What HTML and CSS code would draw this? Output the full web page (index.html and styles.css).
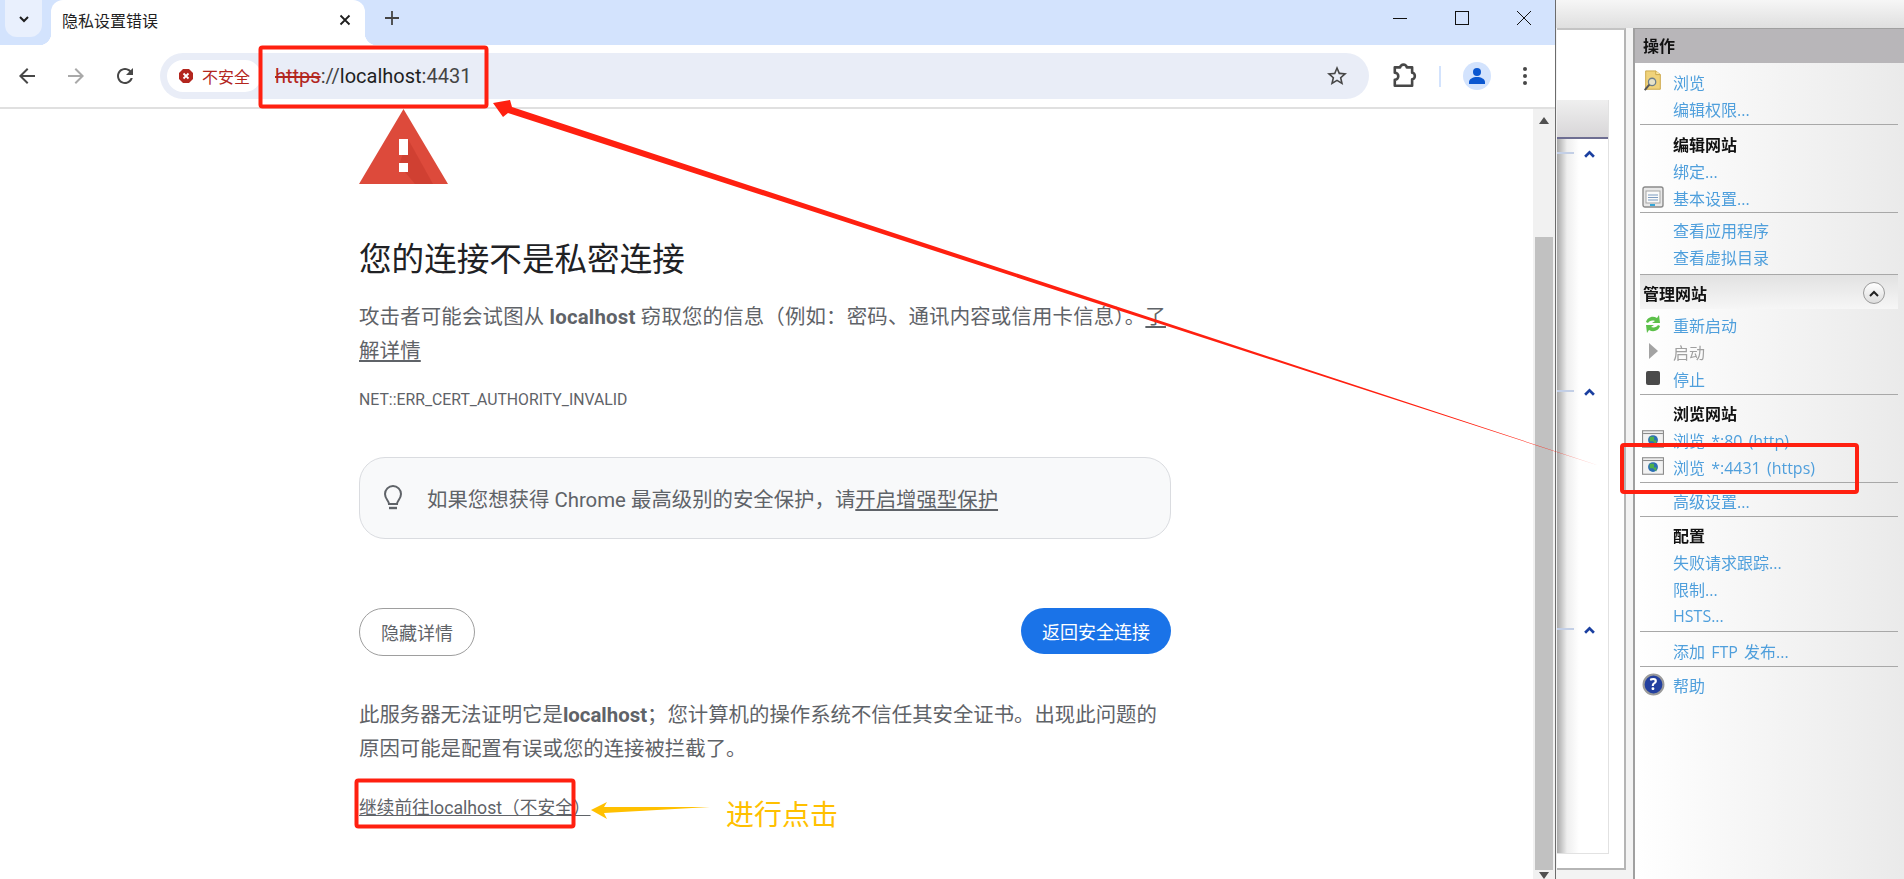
FILE: index.html
```html
<!DOCTYPE html>
<html lang="zh-CN">
<head>
  <meta charset="UTF-8" />
  <meta name="viewport" content="width=device-width, initial-scale=1.0"/>
  <title>隐私设置错误</title>
  <link rel="stylesheet" href="styles.css">
</head>
<body>
  <!-- IIS manager window, mostly hidden behind the browser -->
  <div class="iis">
    <div class="iis-top"></div>
    <div class="iis-main">
      <div class="features">
        <div class="features-inner">
          <div class="features-head"></div>
          <div class="group"><span class="group-line"></span><svg class="chev" viewBox="0 0 10 7"><path d="M1 6l4-4 4 4" fill="none" stroke="#1a3fa0" stroke-width="2.4"/></svg></div>
          <div class="group"><span class="group-line"></span><svg class="chev" viewBox="0 0 10 7"><path d="M1 6l4-4 4 4" fill="none" stroke="#1a3fa0" stroke-width="2.4"/></svg></div>
          <div class="group"><span class="group-line"></span><svg class="chev" viewBox="0 0 10 7"><path d="M1 6l4-4 4 4" fill="none" stroke="#1a3fa0" stroke-width="2.4"/></svg></div>
        </div>
      </div>
      <aside class="actions">
        <div class="actions-head">操作</div>
        <div class="act-list">
          <div class="act">
            <svg class="act-icon" viewBox="0 0 20 24"><path d="M2 1h11l5 4v16H2z" fill="#f0d27a" stroke="#c9a445"/><path d="M13 1v4h5" fill="#fbe9a9" stroke="#c9a445"/><circle cx="9" cy="13" r="4" fill="#e6e2c8" stroke="#6d7f8c" stroke-width="1.4"/><path d="M6 16l-5 6" stroke="#555" stroke-width="2.2"/></svg>
            <a>浏览</a>
          </div>
          <div class="act"><a>编辑权限...</a></div>
          <div class="sep sep-wide"></div>
          <div class="act"><b>编辑网站</b></div>
          <div class="act"><a>绑定...</a></div>
          <div class="act">
            <svg class="act-icon" viewBox="0 0 22 22"><rect x="1" y="1" width="20" height="20" rx="2" fill="#e8e8e8" stroke="#8a8a8a" stroke-width="1.4"/><rect x="4" y="5" width="14" height="12" fill="#fafafa" stroke="#a5a5a5"/><path d="M6 9h10M6 11.500h10M6 14h10" stroke="#7d9cc0"/><rect x="8" y="18" width="5" height="2" fill="#35a7d8"/></svg>
            <a>基本设置...</a>
          </div>
          <div class="sep sep-tight"></div>
          <div class="act"><a>查看应用程序</a></div>
          <div class="act"><a>查看虚拟目录</a></div>
        </div>
        <div class="manage-head">
          <span>管理网站</span>
          <span class="collapse"><svg viewBox="0 0 10 7"><path d="M1 6l4-4 4 4" fill="none" stroke="#222" stroke-width="2"/></svg></span>
        </div>
        <div class="act-list act-list-lower">
          <div class="act">
            <svg class="act-icon" viewBox="0 0 20 22"><path d="M3 9c1-4 6-7 11-4l2-3 1 8-8 0 3-2C9 7 6 8 5 10z" fill="#5cc04a"/><path d="M17 13c-1 4-6 7-11 4l-2 3-1-8 8 0-3 2c3 1 6 0 7-2z" fill="#5cc04a"/></svg>
            <a>重新启动</a>
          </div>
          <div class="act">
            <svg class="act-icon" viewBox="0 0 20 22"><path d="M6 3l9 8-9 8z" fill="#a3a3a3"/></svg>
            <a class="off">启动</a>
          </div>
          <div class="act">
            <svg class="act-icon" viewBox="0 0 20 22"><rect x="3" y="4" width="14" height="14" rx="2" fill="#4a4a4a"/></svg>
            <a>停止</a>
          </div>
          <div class="sep"></div>
          <div class="act"><b>浏览网站</b></div>
          <div class="act">
            <svg class="act-icon" viewBox="0 0 20 16"><rect x=".5" y=".5" width="19" height="15" fill="#f2f2f2" stroke="#8c8c8c"/><path d="M1 3h18" stroke="#8c8c8c"/><circle cx="10" cy="9" r="4.500" fill="#2b6fb5"/><path d="M7 6l4 0 0 4-4 0zM10 10l3-1 0 4z" fill="#4fb04a"/></svg>
            <a>浏览 *:80 (http)</a>
          </div>
          <div class="act">
            <svg class="act-icon" viewBox="0 0 20 16"><rect x=".5" y=".5" width="19" height="15" fill="#f2f2f2" stroke="#8c8c8c"/><path d="M1 3h18" stroke="#8c8c8c"/><circle cx="10" cy="9" r="4.500" fill="#2b6fb5"/><path d="M7 6l4 0 0 4-4 0zM10 10l3-1 0 4z" fill="#4fb04a"/></svg>
            <a>浏览 *:4431 (https)</a>
          </div>
          <div class="sep"></div>
          <div class="act"><a>高级设置...</a></div>
          <div class="sep"></div>
          <div class="act"><b>配置</b></div>
          <div class="act"><a>失败请求跟踪...</a></div>
          <div class="act"><a>限制...</a></div>
          <div class="act"><a>HSTS...</a></div>
          <div class="sep sep-wide"></div>
          <div class="act"><a>添加 FTP 发布...</a></div>
          <div class="sep"></div>
          <div class="act">
            <svg class="act-icon act-icon-help" viewBox="0 0 22 22"><circle cx="11" cy="11" r="9.500" fill="#23409f" stroke="#9a9a9a" stroke-width="2"/><text x="11" y="16" text-anchor="middle" class="help-mark">?</text></svg>
            <a>帮助</a>
          </div>
        </div>
      </aside>
    </div>
  </div>

  <!-- browser window -->
  <div class="chrome">
    <div class="tabstrip">
      <div class="tab-search">
        <svg width="16" height="16" viewBox="0 0 16 16"><path d="M4 6l4 4 4-4" fill="none" stroke="#1f1f1f" stroke-width="2"/></svg>
      </div>
      <div class="tab">
        <span class="tab-title">隐私设置错误</span>
        <svg width="14" height="14" viewBox="0 0 14 14"><path d="M2.500 2.500l9 9M11.500 2.500l-9 9" stroke="#1f1f1f" stroke-width="1.800"/></svg>
      </div>
      <svg class="new-tab" width="16" height="16" viewBox="0 0 16 16"><path d="M8 1v14M1 8h14" stroke="#444" stroke-width="1.800"/></svg>
      <div class="win-btns">
        <svg width="16" height="16" viewBox="0 0 16 16"><path d="M1 8.500h14" stroke="#111"/></svg>
        <svg width="16" height="16" viewBox="0 0 16 16"><rect x="1.500" y="1.500" width="13" height="13" fill="none" stroke="#111"/></svg>
        <svg width="16" height="16" viewBox="0 0 16 16"><path d="M1 1l14 14M15 1L1 15" stroke="#111"/></svg>
      </div>
    </div>
    <div class="toolbar">
      <svg class="nav" viewBox="0 0 24 24"><path fill="#474747" d="M20 11H7.830l5.590-5.590L12 4l-8 8 8 8 1.410-1.410L7.830 13H20v-2z"/></svg>
      <svg class="nav" viewBox="0 0 24 24"><path fill="#a9a9a9" d="M4 11h12.170l-5.590-5.590L12 4l8 8-8 8-1.410-1.410L16.170 13H4v-2z"/></svg>
      <svg class="nav" viewBox="0 0 24 24"><path fill="#474747" d="M17.650 6.350C16.200 4.900 14.210 4 12 4c-4.420 0-7.990 3.580-7.990 8s3.570 8 7.990 8c3.730 0 6.840-2.550 7.730-6h-2.080c-.82 2.330-3.040 4-5.650 4-3.310 0-6-2.690-6-6s2.690-6 6-6c1.660 0 3.140.69 4.220 1.780L13 11h7V4l-2.350 2.350z"/></svg>
      <div class="omnibox">
        <div class="chip">
          <svg width="16" height="16" viewBox="0 0 16 16"><path d="M5 1h6l4 4v6l-4 4H5l-4-4V5z" fill="#b3261e"/><path d="M5.500 5.500l5 5M10.500 5.500l-5 5" stroke="#fff" stroke-width="1.800"/></svg>
          <span>不安全</span>
        </div>
        <div class="url"><s>https</s><span class="url-sep">://</span><span class="url-host">localhost</span><span class="url-sep">:4431</span></div>
        <svg class="star" viewBox="0 0 24 24"><path fill="#474747" d="M22 9.240l-7.190-.62L12 2 9.190 8.630 2 9.240l5.460 4.730L5.820 21 12 17.270 18.180 21l-1.630-7.030L22 9.240zM12 15.400l-3.760 2.270 1-4.280-3.320-2.880 4.380-.38L12 6.100l1.710 4.040 4.380.38-3.320 2.880 1 4.280L12 15.400z"/></svg>
      </div>
      <div class="tool-icons">
        <svg class="puzzle" viewBox="0 0 24 24"><path d="M3.500 4h5a3 2.500 0 0 1 6 0h5v5a2.500 3 0 0 1 0 6v6h-14l-2 0v-5.500a3 3 0 0 0 0-6.500z" fill="none" stroke="#474747" stroke-width="2.400" stroke-linejoin="round"/></svg>
        <span class="tool-sep"></span>
        <span class="avatar"><svg width="20" height="20" viewBox="0 0 20 20"><circle cx="10" cy="6" r="4" fill="#0b57d0"/><path d="M2 18v-2c0-3 4-5 8-5s8 2 8 5v2z" fill="#0b57d0"/></svg></span>
        <svg class="dots" width="4" height="20" viewBox="0 0 4 20"><circle cx="2" cy="3" r="2" fill="#474747"/><circle cx="2" cy="10" r="2" fill="#474747"/><circle cx="2" cy="17" r="2" fill="#474747"/></svg>
      </div>
    </div>
    <div class="viewport">
      <main class="page">
        <svg class="warn" width="89" height="75" viewBox="0 0 89 75">
          <path d="M44.500 0L89 75H0z" fill="#dd4a3b"/>
          <path d="M49 30l25 45H56L40 56z" fill="#c4382b" opacity=".55"/>
          <rect x="40" y="30" width="9" height="16" fill="#fff"/>
          <rect x="40" y="54" width="9" height="9" fill="#fff"/>
        </svg>
        <h1>您的连接不是私密连接</h1>
        <p class="lead">攻击者可能会试图从 <b>localhost</b> 窃取您的信息（例如：密码、通讯内容或信用卡信息）。<a>了<br>解详情</a></p>
        <div class="err-code">NET::ERR_CERT_AUTHORITY_INVALID</div>
        <div class="tip">
          <svg width="20" height="27" viewBox="0 0 20 27"><path d="M6 19c0-3-4-5-4-10a8 8 0 0 1 16 0c0 5-4 7-4 10z" fill="none" stroke="#5f6368" stroke-width="2"/><path d="M6 23h8" stroke="#5f6368" stroke-width="2.400"/></svg>
          <span>如果您想获得 Chrome 最高级别的安全保护，请<a>开启增强型保护</a></span>
        </div>
        <div class="btn-row">
          <button class="btn-hide">隐藏详情</button>
          <button class="btn-back">返回安全连接</button>
        </div>
        <p class="detail">此服务器无法证明它是<b>localhost</b>；您计算机的操作系统不信任其安全证书。出现此问题的<br>原因可能是配置有误或您的连接被拦截了。</p>
        <a class="proceed">继续前往localhost（不安全）</a>
      </main>
      <div class="scrollbar">
        <span class="sb-up"></span>
        <span class="sb-thumb"></span>
        <span class="sb-down"></span>
      </div>
    </div>
  </div>

  <!-- annotations drawn on top of the screenshot -->
  <svg class="marks" width="1904" height="879" viewBox="0 0 1904 879">
    <rect class="mark-box" x="260.500" y="47.500" width="226" height="59" rx="2"/>
    <rect class="mark-box" x="356.500" y="780.500" width="217" height="46" rx="2"/>
    <rect class="mark-box" x="1622" y="445" width="235" height="47" rx="2"/>
    <path d="M493 103L510 100L512 107L1600 466L508 113L503 117z" fill="#ff2010"/>
    <path d="M591 810L607 802L604 807L710 807L604 813L607 819z" fill="#ffc000"/>
  </svg>
  <div class="click-note">进行点击</div>
</body>
</html>
```

FILE: styles.css
```css
html, body { margin: 0; height: 100%; }
body {
  position: relative;
  width: 1904px;
  height: 879px;
  overflow: hidden;
  background: #fff;
  font-family: Roboto, "Noto Sans CJK SC", sans-serif;
}

/* IIS window */
.iis {
  position: absolute;
  inset: 0;
  display: flex;
  flex-direction: column;
  background: #f3f3f3;
  font-family: "Open Sans", "Noto Sans CJK SC", sans-serif;
}
.iis-top {
  height: 28px;
  background: linear-gradient(#f6f6f6, #dfdfdf);
}
.iis-main {
  flex: 1;
  display: flex;
  justify-content: flex-end;
  gap: 7px;
}
.features {
  width: 69px;
  height: 842px;
  box-sizing: border-box;
  background: #fff;
  border-top: 2px solid #c4c4c4;
  border-right: 2px solid #b5b5b5;
  border-bottom: 2px solid #b5b5b5;
  padding-top: 70px;
}
.features-inner {
  width: 51px;
  height: 753px;
  border-right: 1px solid #e2e2e2;
  border-bottom: 1px solid #e2e2e2;
  background: linear-gradient(90deg, #a9a9a9, #eee 10px, #fff 22px);
}
.features-head {
  height: 37px;
  background: linear-gradient(#efefef, #d8d6d8);
  border-bottom: 2px solid #6e6e92;
}
.group {
  height: 238px;
  display: flex;
  align-items: flex-start;
  padding: 11px 13px 0 0;
  box-sizing: border-box;
}
.group-line {
  width: 17px;
  height: 2px;
  margin-top: 2px;
  background: #c3cfe6;
}
.chev { width: 11px; height: 8px; margin-left: auto; }

.actions {
  width: 271px;
  height: 851px;
  box-sizing: border-box;
  border-left: 2px solid #a0a0a0;
  border-top: 1px solid #a0a0a0;
  background: linear-gradient(90deg, #fff, #eaeaea);
  font-size: 16px;
  filter: blur(.4px);
}
.actions-head {
  height: 34px;
  line-height: 34px;
  padding-left: 8px;
  background: #b8b6b9;
  color: #111;
  font-weight: 700;
}
.act-list { padding: 5px 6px 0 5px; }
.act-list-lower { padding-top: 2px; }
.act {
  display: flex;
  align-items: center;
  height: 27px;
  padding-left: 33px;
  position: relative;
  white-space: nowrap;
}
.act a { color: #4f9fdc; word-spacing: 2px; }
.act a.off { color: #a0a0a0; }
.act b { color: #111; }
.act-icon {
  position: absolute;
  left: 2px;
  top: 2px;
  width: 22px;
  height: 22px;
}
.act-icon-help { width: 23px; height: 23px; }
.help-mark { fill: #fff; font-size: 15px; font-weight: 700; font-family: "Open Sans", sans-serif; }
.sep {
  height: 7px;
  position: relative;
}
.sep::after {
  content: "";
  position: absolute;
  left: 0;
  right: 0;
  top: 2px;
  height: 1px;
  background: #a8a8a8;
}
.sep-wide { height: 8px; }
.sep-tight { height: 5px; }
.sep-tight::after { top: 1px; }
.manage-head {
  display: flex;
  align-items: center;
  justify-content: space-between;
  height: 35px;
  margin: 4px 6px 0 5px;
  padding: 2px 13px 0 3px;
  background: linear-gradient(#e2e2e2, #f6f6f6);
  color: #111;
  font-weight: 700;
  border-top: 1px solid #a8a8a8;
  box-sizing: border-box;
}
.collapse {
  display: flex;
  align-items: center;
  justify-content: center;
  width: 20px;
  height: 20px;
  border-radius: 50%;
  border: 1px solid #9a9a9a;
  background: linear-gradient(#fff, #ddd);
}
.collapse svg { width: 10px; height: 7px; }

/* browser window */
.chrome {
  position: absolute;
  left: 0;
  top: 0;
  width: 1555px;
  height: 879px;
  display: flex;
  flex-direction: column;
  background: #fff;
  border-right: 1px solid #6c6c6c;
}
.tabstrip {
  height: 45px;
  flex: none;
  display: flex;
  background: #d3e3fd;
  position: relative;
}
.tab-search {
  width: 37px;
  height: 37px;
  margin-left: 5px;
  display: flex;
  align-items: center;
  justify-content: center;
  background: #e9f0fd;
  border-radius: 0 0 12px 12px;
}
.tab {
  width: 314px;
  height: 45px;
  margin-left: 9px;
  padding: 0 13px 5px 11px;
  box-sizing: border-box;
  display: flex;
  align-items: center;
  justify-content: space-between;
  background: #fff;
  border-radius: 12px 12px 0 0;
  position: relative;
}
.tab::before, .tab::after {
  content: "";
  position: absolute;
  bottom: 0;
  width: 12px;
  height: 12px;
}
.tab::before { left: -12px; background: radial-gradient(circle at 0 0, transparent 12px, #fff 12.500px); }
.tab::after { right: -12px; background: radial-gradient(circle at 100% 0, transparent 12px, #fff 12.500px); }
.tab-title { font-size: 16px; color: #1f1f1f; }
.new-tab { margin: 10px 0 0 19px; }
.win-btns {
  display: flex;
  gap: 46px;
  margin-left: auto;
  padding: 10px 23px 0 0;
}
.toolbar {
  height: 64px;
  flex: none;
  display: flex;
  align-items: center;
  padding: 0 0 0 15px;
  box-sizing: border-box;
  background: #fff;
  border-radius: 10px 10px 0 0;
  border-bottom: 2px solid #e0e0e0;
}
.nav { width: 24px; height: 24px; margin-right: 25px; flex: none; }
.omnibox {
  width: 1209px;
  height: 46px;
  margin-left: -2px;
  box-sizing: border-box;
  display: flex;
  align-items: center;
  padding: 0 20px 0 7px;
  border-radius: 23px;
  background: #e9edf7;
}
.chip {
  width: 94px;
  height: 32px;
  box-sizing: border-box;
  display: flex;
  align-items: center;
  gap: 8px;
  padding-left: 11px;
  border-radius: 16px;
  background: #fff;
  color: #b3261e;
  font-size: 16px;
}
.url {
  margin-left: 14px;
  font-size: 20px;
  color: #1f1f1f;
  white-space: nowrap;
}
.url s { color: #b3261e; }
.url-sep { color: #444; }
.star { width: 24px; height: 24px; margin-left: auto; }
.tool-icons {
  display: flex;
  align-items: center;
  margin-left: 22px;
}
.puzzle { width: 26px; height: 26px; }
.tool-sep {
  width: 2px;
  height: 21px;
  margin-left: 22px;
  background: #d3e3fd;
}
.avatar {
  width: 28px;
  height: 28px;
  margin-left: 22px;
  border-radius: 50%;
  background: #d3e3fd;
  display: flex;
  align-items: center;
  justify-content: center;
}
.dots { margin-left: 32px; }

.viewport {
  flex: 1;
  display: flex;
  min-height: 0;
  overflow: hidden;
}
.page {
  flex: 1;
  padding-left: 359px;
  color: #5f6368;
}
.page a { text-decoration: underline; }
.warn { display: block; }
.page h1 {
  margin: 54px 0 0;
  width: 812px;
  font-size: 32.600px;
  line-height: 44px;
  font-weight: 400;
  color: #202124;
}
.lead, .detail {
  width: 812px;
  margin: 18px 0 0;
  font-size: 20.400px;
  line-height: 34px;
}
.lead { letter-spacing: .2px; }
.err-code {
  margin-top: 21px;
  font-size: 15.800px;
  line-height: 22px;
}
.tip {
  width: 812px;
  height: 82px;
  margin-top: 46px;
  box-sizing: border-box;
  display: flex;
  align-items: center;
  gap: 24px;
  padding-left: 23px;
  border: 1px solid #dadce0;
  border-radius: 26px;
  background: #f8f9fa;
  font-size: 20.400px;
}
.btn-row {
  width: 812px;
  margin-top: 69px;
  display: flex;
  justify-content: space-between;
  align-items: flex-start;
}
.btn-row button {
  font-family: inherit;
  font-size: 18px;
  border-radius: 24px;
  padding: 0;
}
.btn-hide {
  width: 116px;
  height: 48px;
  border: 1px solid #9e9e9e;
  background: #fff;
  color: #5f6368;
}
.btn-back {
  width: 150px;
  height: 46px;
  border: none;
  background: #1a73e8;
  color: #fff;
}
.detail { margin-top: 42px; }
.proceed {
  display: block;
  width: max-content;
  margin-top: 30px;
  font-size: 17.700px;
  line-height: 24px;
}
.scrollbar {
  width: 22px;
  flex: none;
  display: flex;
  flex-direction: column;
  align-items: center;
  background: #f1f1f1;
  padding-top: 8px;
}
.sb-up, .sb-down {
  width: 0;
  height: 0;
  border-left: 5.500px solid transparent;
  border-right: 5.500px solid transparent;
}
.sb-up { border-bottom: 7px solid #505050; }
.sb-down { border-top: 7px solid #505050; margin-top: 2px; }
.sb-thumb {
  width: 18px;
  height: 633px;
  margin-top: 113px;
  background: #c1c1c1;
}

/* annotations */
.marks { position: absolute; left: 0; top: 0; pointer-events: none; }
.mark-box { fill: none; stroke: #ff2010; stroke-width: 4; }
.click-note {
  position: absolute;
  left: 726px;
  top: 796px;
  font-size: 28px;
  line-height: 40px;
  color: #ffc000;
}
```
